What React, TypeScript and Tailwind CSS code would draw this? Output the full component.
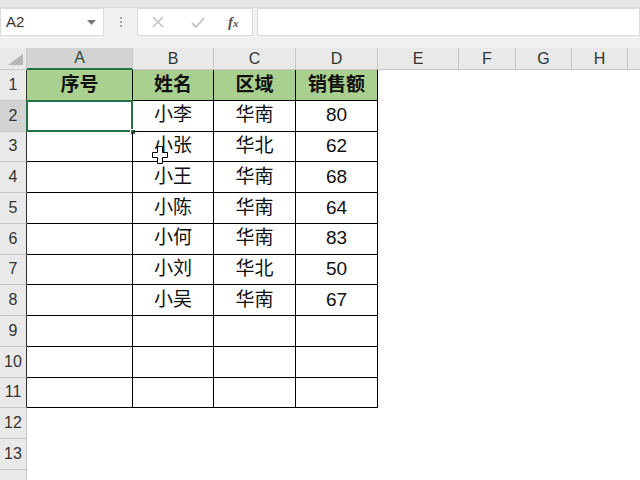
import React from 'react';

const cols = [
  { key: 'A', w: 'w-[106px]' },
  { key: 'B', w: 'w-[81px]' },
  { key: 'C', w: 'w-[82px]' },
  { key: 'D', w: 'w-[82px]' },
  { key: 'E', w: 'w-[81px]' },
  { key: 'F', w: 'w-[57px]' },
  { key: 'G', w: 'w-[56px]' },
  { key: 'H', w: 'w-[56px]' },
];

const data: string[][] = [
  ['序号', '姓名', '区域', '销售额'],
  ['', '小李', '华南', '80'],
  ['', '小张', '华北', '62'],
  ['', '小王', '华南', '68'],
  ['', '小陈', '华南', '64'],
  ['', '小何', '华南', '83'],
  ['', '小刘', '华北', '50'],
  ['', '小吴', '华南', '67'],
  ['', '', '', ''],
  ['', '', '', ''],
  ['', '', '', ''],
];

function FormulaBar() {
  return (
    <div className="flex h-[28px] items-stretch">
      <div className="flex w-[104px] items-center justify-between border border-[#dadada] bg-white pl-[5px] pr-[7px]">
        <span className="text-[15px] text-[#333]">A2</span>
        <svg width="9" height="5" viewBox="0 0 9 5">
          <path d="M0 0h9L4.5 5z" fill="#777" />
        </svg>
      </div>
      <div className="flex w-[33px] flex-col items-center justify-center gap-[2px]">
        {[0, 1, 2].map((i) => (
          <div key={i} className="h-[2px] w-[2px] bg-[#aaa]" />
        ))}
      </div>
      <div className="flex w-[116px] items-center border border-[#dadada] bg-white">
        <svg className="ml-[14px]" width="12" height="12" viewBox="0 0 12 12">
          <path d="M1 1l10 10M11 1L1 11" stroke="#c3c3c3" strokeWidth="1.6" />
        </svg>
        <svg className="ml-[27px]" width="14" height="11" viewBox="0 0 14 11">
          <path d="M1 6l4 4 8-9" stroke="#c3c3c3" strokeWidth="1.8" fill="none" />
        </svg>
        <span className="ml-[23px] font-['Liberation_Serif',serif] text-[15px] italic font-bold text-[#555]">
          f<span className="text-[11px]">x</span>
        </span>
      </div>
      <div className="ml-[4px] flex-1 border border-[#dadada] bg-white" />
    </div>
  );
}

function PlusCursor() {
  return (
    <svg className="pointer-events-none absolute left-[152px] top-[146px]" width="16" height="18" viewBox="0 0 16 18">
      <path
        d="M5.5 0.5h5v6h5v5h-5v6h-5v-6h-5v-5h5z"
        fill="#fff"
        stroke="#000"
        strokeWidth="1"
      />
    </svg>
  );
}

export default function App() {
  const rowCount = 14;
  return (
    <div className="relative h-[480px] w-[640px] overflow-hidden bg-[#f1f1f1] font-['Liberation_Sans','Noto_Sans_CJK_SC',sans-serif]">
      <div className="h-[8px] border-b border-[#d9d9d9] bg-[#e6e6e6]" />
      <FormulaBar />
      <div className="h-[12px]" />

      {/* column headers */}
      <div className="flex h-[22px]">
        <div className="relative w-[27px] shrink-0 border-r border-b border-[#c6c6c6] bg-[#e9e9e9]">
          <svg className="absolute bottom-[4px] right-[3px]" width="15" height="11" viewBox="0 0 15 11">
            <path d="M15 0v11H0z" fill="#b6b6b6" />
          </svg>
        </div>
        {cols.map((c) => {
          const sel = c.key === 'A';
          return (
            <div
              key={c.key}
              className={`${c.w} shrink-0 flex items-center justify-center border-r text-[16px] ${
                sel
                  ? 'border-b-2 border-r-[#c6c6c6] border-b-[#217346] bg-[#d3d3d3] text-[#2b4a37]'
                  : 'border-b border-[#c6c6c6] bg-[#e9e9e9] text-[#333]'
              }`}
            >
              {c.key}
            </div>
          );
        })}
        <div className="flex-1 border-b border-[#c6c6c6] bg-[#e9e9e9]" />
      </div>

      {/* rows */}
      <div className="bg-white">
        {Array.from({ length: rowCount }, (_, r) => {
          const inTable = r < data.length;
          const selRow = r === 1;
          return (
            <div key={r} className="flex h-[30.75px]">
              <div
                className={`flex w-[27px] shrink-0 items-center justify-center border-b border-r text-[16px] ${
                  selRow ? 'bg-[#d3d3d3] text-[#333]' : 'bg-[#e9e9e9] text-[#333]'
                } ${inTable ? 'border-r-[#333] border-b-[#c6c6c6]' : 'border-[#c6c6c6]'}`}
              >
                {r < 13 ? r + 1 : ''}
              </div>
              {inTable &&
                data[r].map((v, ci) => {
                  const head = r === 0;
                  return (
                    <div
                      key={ci}
                      className={`${cols[ci].w} relative shrink-0 flex items-center justify-center border-b border-r border-[#000] text-[19px] text-[#111] ${
                        head ? 'bg-[#a9d08e] font-bold' : ''
                      }`}
                    >
                      {v}
                      {r === 1 && ci === 0 && (
                        <>
                          <div className="absolute inset-[-1px] border-2 border-[#217346]" />
                          <div className="absolute bottom-[-4px] right-[-4px] h-[6px] w-[6px] border border-white bg-[#217346]" />
                        </>
                      )}
                    </div>
                  );
                })}
              <div className="flex-1" />
            </div>
          );
        })}
      </div>
      <PlusCursor />
    </div>
  );
}
